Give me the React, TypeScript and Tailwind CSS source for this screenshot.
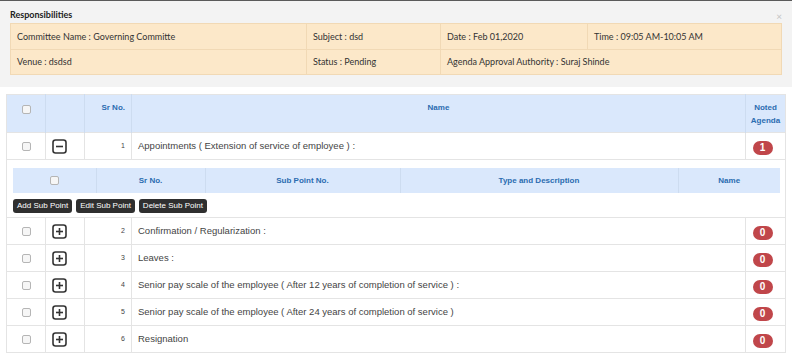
import React from "react";

const rows = [
  { sr: 2, name: "Confirmation / Regularization :", noted: 0 },
  { sr: 3, name: "Leaves :", noted: 0 },
  { sr: 4, name: "Senior pay scale of the employee ( After 12 years of completion of service ) :", noted: 0 },
  { sr: 5, name: "Senior pay scale of the employee ( After 24 years of completion of service )", noted: 0 },
  { sr: 6, name: "Resignation", noted: 0 },
];

const Check = () => (
  <span className="inline-block w-[9px] h-[9px] rounded-[2px] border border-[#b5b5b5] bg-[#f6f6f6] align-middle" />
);

const ToggleIcon = ({ open }: { open: boolean }) => (
  <svg width="15" height="15" viewBox="0 0 15 15" className="block">
    <rect x="1" y="1" width="13" height="13" rx="2.5" fill="none" stroke="#333" strokeWidth="1.6" />
    <path d="M4 7.5h7" stroke="#333" strokeWidth="1.6" />
    {!open && <path d="M7.5 4v7" stroke="#333" strokeWidth="1.6" />}
  </svg>
);

const Badge = ({ n }: { n: number }) => (
  <span className="inline-flex items-center justify-center w-[20px] h-[14px] rounded-full bg-[#c0464a] text-white text-[10px] font-bold font-['Liberation_Sans',sans-serif]">
    {n}
  </span>
);

const MainRow = ({ sr, name, noted, open }: { sr: number; name: string; noted: number; open: boolean }) => (
  <tr className="h-[27px] border-t border-[#e4e4e4]">
    <td className="border-r border-[#e4e4e4] text-center">
      <Check />
    </td>
    <td className="border-r border-[#e4e4e4] pl-[6px]">
      <ToggleIcon open={open} />
    </td>
    <td className="border-r border-[#e4e4e4] text-right pr-[6px] text-[7px]">{sr}</td>
    <td className="border-r border-[#e4e4e4] pl-[6px] text-[9.5px]">{name}</td>
    <td className="text-center pr-[6px]">
      <Badge n={noted} />
    </td>
  </tr>
);

export default function App() {
  return (
    <div className="w-[792px] h-[362px] bg-white overflow-hidden text-[#333] font-['Liberation_Sans',Arial,sans-serif]">
      <div className="border-t border-[#5a5a5a] bg-[#f3f3f3] h-[87px] px-[10px] pt-[9px] relative font-['Lato',sans-serif]">
        <div className="text-[9px] font-bold text-[#222] leading-[10px]">Responsibilities</div>
        <span className="absolute right-[10px] top-[8px] text-[10px] text-[#c4c4c4]">×</span>
        <table className="mt-[3px] w-[772px] border-collapse bg-[#fce8c9] text-[9px] text-[#333] table-fixed">
          <colgroup>
            <col className="w-[296px]" />
            <col className="w-[134px]" />
            <col className="w-[147px]" />
            <col />
          </colgroup>
          <tbody>
            <tr className="h-[26px]">
              <td className="border border-[#f1d9b5] pl-[6px]">Committee Name : Governing Committe</td>
              <td className="border border-[#f1d9b5] pl-[6px]">Subject : dsd</td>
              <td className="border border-[#f1d9b5] pl-[6px]">Date : Feb 01,2020</td>
              <td className="border border-[#f1d9b5] pl-[6px]">Time : 09:05 AM-10:05 AM</td>
            </tr>
            <tr className="h-[25px]">
              <td className="border border-[#f1d9b5] pl-[6px]">Venue : dsdsd</td>
              <td className="border border-[#f1d9b5] pl-[6px]">Status : Pending</td>
              <td colSpan={2} className="border border-[#f1d9b5] pl-[6px]">Agenda Approval Authority : Suraj Shinde</td>
            </tr>
          </tbody>
        </table>
      </div>

      <div className="px-[6px] pt-[7px]">
        <table className="w-[780px] border-collapse table-fixed border border-[#e4e4e4] text-[#444]">
          <colgroup>
            <col className="w-[39px]" />
            <col className="w-[39px]" />
            <col className="w-[47px]" />
            <col className="w-[614px]" />
            <col />
          </colgroup>
          <thead>
            <tr className="h-[38px] bg-[#dae8fc] text-[8px] font-bold text-[#2b6cb0] leading-[13px] align-top">
              <th className="border-r border-[#cddcf0] pt-[7px]">
                <div className="pt-[1px]"><Check /></div>
              </th>
              <th className="border-r border-[#cddcf0]"></th>
              <th className="border-r border-[#cddcf0] text-right pr-[6px] pt-[6px]">Sr No.</th>
              <th className="border-r border-[#cddcf0] text-center pt-[6px]">Name</th>
              <th className="text-center pt-[6px]">Noted<br />Agenda</th>
            </tr>
          </thead>
          <tbody>
            <MainRow sr={1} name="Appointments ( Extension of service of employee ) :" noted={1} open />
            <tr className="border-t border-[#e4e4e4]">
              <td colSpan={5} className="px-[6px] pt-[8px] pb-[4px]">
                <table className="w-[767px] border-collapse table-fixed text-[8px] font-bold text-[#2b6cb0]">
                  <colgroup>
                    <col className="w-[83px]" />
                    <col className="w-[109px]" />
                    <col className="w-[195px]" />
                    <col className="w-[278px]" />
                    <col />
                  </colgroup>
                  <thead>
                    <tr className="h-[25px] bg-[#dae8fc]">
                      <th className="border-r border-[#cddcf0]"><Check /></th>
                      <th className="border-r border-[#cddcf0]">Sr No.</th>
                      <th className="border-r border-[#cddcf0]">Sub Point No.</th>
                      <th className="border-r border-[#cddcf0]">Type and Description</th>
                      <th>Name</th>
                    </tr>
                  </thead>
                </table>
                <div className="flex gap-[4px] mt-[6px] text-[8px] text-white">
                  <button className="h-[14px] px-[4px] rounded-[3px] bg-[#2f2f2f] leading-none">Add Sub Point</button>
                  <button className="h-[14px] px-[4px] rounded-[3px] bg-[#2f2f2f] leading-none">Edit Sub Point</button>
                  <button className="h-[14px] px-[4px] rounded-[3px] bg-[#2f2f2f] leading-none">Delete Sub Point</button>
                </div>
              </td>
            </tr>
            {rows.map((r) => (
              <MainRow key={r.sr} sr={r.sr} name={r.name} noted={r.noted} open={false} />
            ))}
          </tbody>
        </table>
      </div>
    </div>
  );
}
